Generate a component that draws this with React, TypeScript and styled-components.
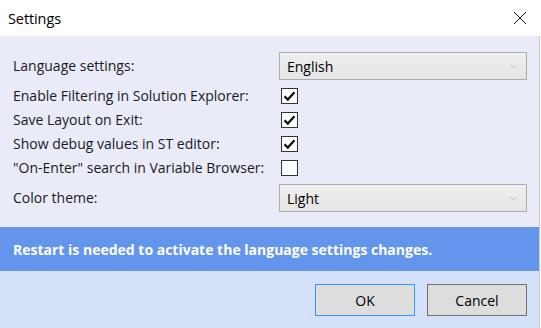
import React from "react";
import styled, { createGlobalStyle } from "styled-components";

const Global = createGlobalStyle`
  html, body { margin: 0; padding: 0; background: #ffffff; }
  body { font-family: "Open Sans", "Noto Sans", sans-serif; }
  * { box-sizing: border-box; }
`;

const Window = styled.div`
  width: 541px;
  height: 328px;
  display: flex;
  flex-direction: column;
  background: #ffffff;
  overflow: hidden;
`;

const TitleBar = styled.div`
  height: 36px;
  display: flex;
  align-items: center;
  justify-content: space-between;
  padding: 0 14px 0 8px;
  background: #ffffff;
`;

const Title = styled.span`
  font-size: 14.5px;
  color: #000;
  letter-spacing: -0.1px;
`;

const CloseBtn = styled.div`
  width: 14px;
  height: 14px;
  display: flex;
  align-items: center;
  justify-content: center;
`;

const Content = styled.div`
  flex: 1;
  display: flex;
  flex-direction: column;
  border-right: 1px solid #c6c9d2;
  width: 540px;
`;

const Body = styled.div`
  background: #e9ebf9;
  padding: 16px 13px 15px 13px;
  display: grid;
  grid-template-columns: 266px 248px;
  row-gap: 8px;
  align-items: center;
`;

const Label = styled.div`
  font-size: 14px;
  color: #1a1a1a;
  letter-spacing: 0;
  line-height: 16px;
  white-space: nowrap;
`;

const Select = styled.div`
  height: 28px;
  border: 1px solid #acacac;
  background: linear-gradient(#efefef, #e5e5e5);
  display: flex;
  align-items: center;
  justify-content: space-between;
  padding: 0 9px 0 7px;
  font-size: 14px;
  color: #000;
`;

const CheckCell = styled.div`
  height: 16px;
  padding-left: 2px;
  display: flex;
  align-items: center;
`;

const Box = styled.div`
  width: 17px;
  height: 16px;
  border: 1px solid #333333;
  background: #ffffff;
  display: flex;
  align-items: center;
  justify-content: center;
`;

const Banner = styled.div`
  height: 44px;
  background: #6495ed;
  display: flex;
  align-items: center;
  padding-left: 13px;
  color: #ffffff;
  font-weight: 700;
  font-size: 14px;
  letter-spacing: 0;
`;

const Footer = styled.div`
  flex: 1;
  background: #d5e1f8;
  display: flex;
  justify-content: flex-end;
  align-items: flex-start;
  padding: 13px 12px 0 0;
  gap: 12px;
`;

const Button = styled.button<{ $primary?: boolean }>`
  width: 100px;
  height: 32px;
  background: #dddddd;
  border: 1px solid ${(p) => (p.$primary ? "#3c96f5" : "#707070")};
  font-family: "Open Sans", "Noto Sans", sans-serif;
  font-size: 14px;
  color: #000;
  padding: 0;
`;

const Chevron = () => (
  <svg width="7" height="5" viewBox="0 0 7 5">
    <path d="M0.5 0.8 L3.5 3.8 L6.5 0.8" fill="none" stroke="#b5b5b5" strokeWidth="1" />
  </svg>
);

const Check = () => (
  <svg width="13" height="12" viewBox="0 0 13 12">
    <path d="M1.5 6.2 L4.8 9.5 L11.5 2.2" fill="none" stroke="#111" strokeWidth="2.3" />
  </svg>
);

const rows: { label: string; checked: boolean }[] = [
  { label: "Enable Filtering in Solution Explorer:", checked: true },
  { label: "Save Layout on Exit:", checked: true },
  { label: "Show debug values in ST editor:", checked: true },
  { label: "\"On-Enter\" search in Variable Browser:", checked: false },
];

export default function App() {
  return (
    <Window>
      <Global />
      <TitleBar>
        <Title>Settings</Title>
        <CloseBtn>
          <svg width="14" height="14" viewBox="0 0 14 14">
            <path d="M1 1 L13 13 M13 1 L1 13" stroke="#111" strokeWidth="1" />
          </svg>
        </CloseBtn>
      </TitleBar>
      <Content>
        <Body>
          <Label>Language settings:</Label>
          <Select>
            <span>English</span>
            <Chevron />
          </Select>
          {rows.map((r) => (
            <React.Fragment key={r.label}>
              <Label>{r.label}</Label>
              <CheckCell>
                <Box>{r.checked && <Check />}</Box>
              </CheckCell>
            </React.Fragment>
          ))}
          <Label>Color theme:</Label>
          <Select>
            <span>Light</span>
            <Chevron />
          </Select>
        </Body>
        <Banner>Restart is needed to activate the language settings changes.</Banner>
        <Footer>
          <Button $primary>OK</Button>
          <Button>Cancel</Button>
        </Footer>
      </Content>
    </Window>
  );
}
